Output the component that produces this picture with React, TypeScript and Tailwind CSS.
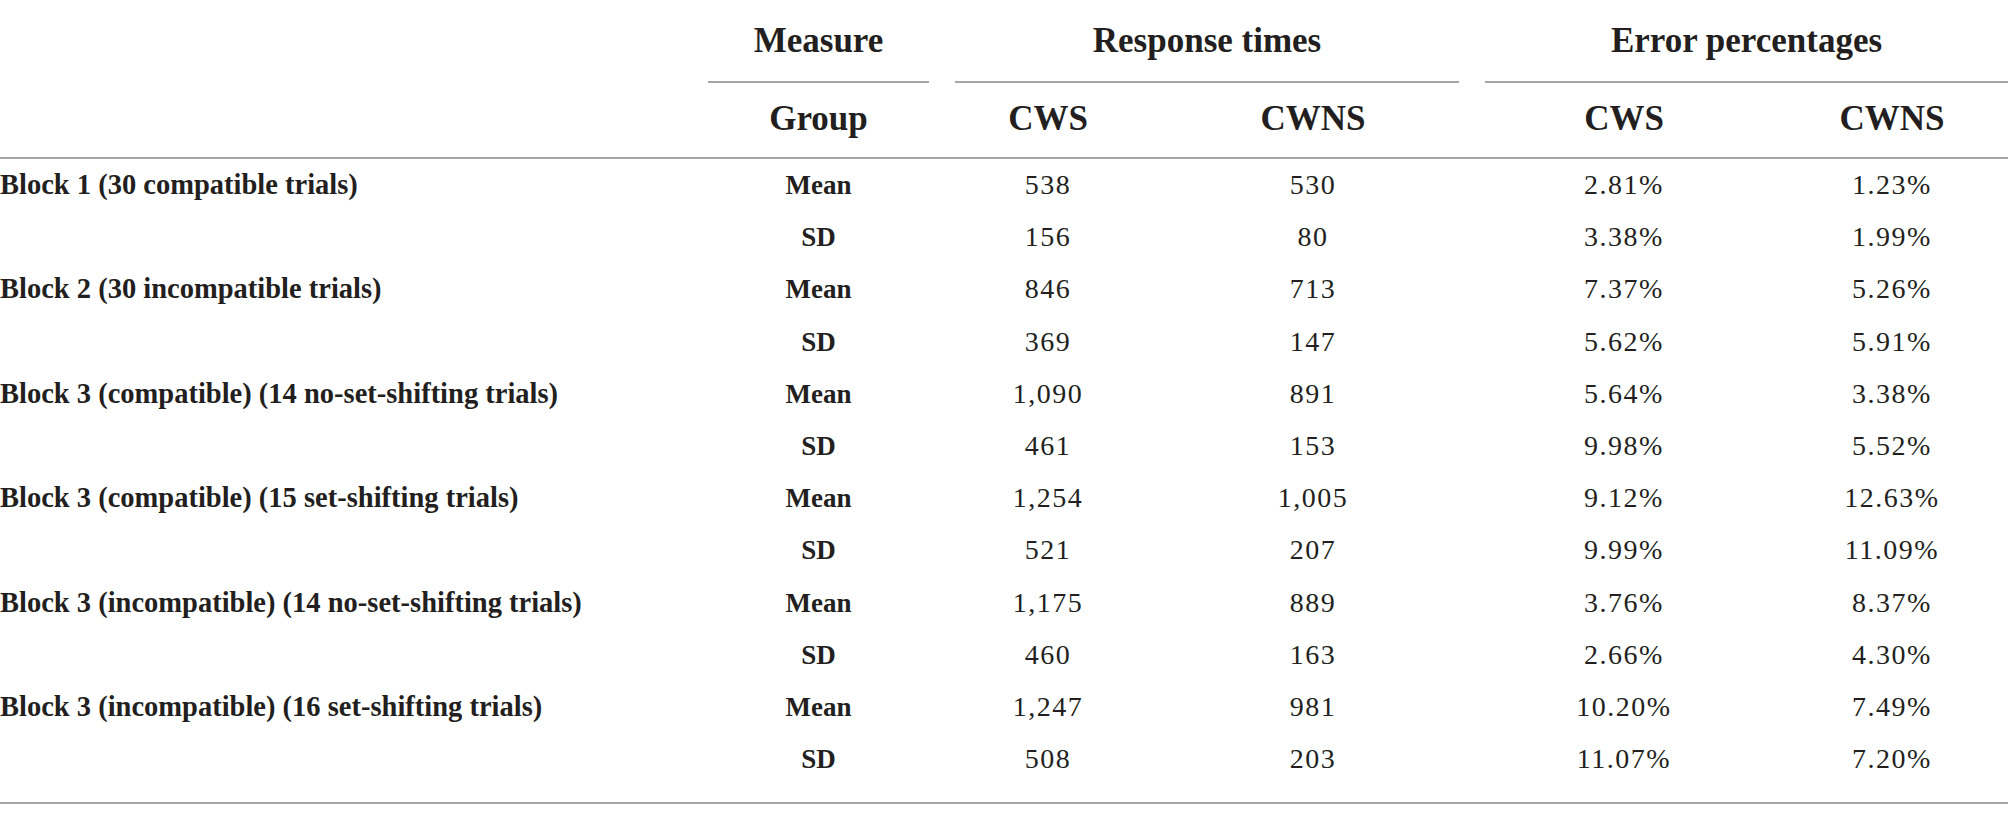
const rows = [
  { label: "Block 1 (30 compatible trials)", mean: ["538", "530", "2.81%", "1.23%"], sd: ["156", "80", "3.38%", "1.99%"] },
  { label: "Block 2 (30 incompatible trials)", mean: ["846", "713", "7.37%", "5.26%"], sd: ["369", "147", "5.62%", "5.91%"] },
  { label: "Block 3 (compatible) (14 no-set-shifting trials)", mean: ["1,090", "891", "5.64%", "3.38%"], sd: ["461", "153", "9.98%", "5.52%"] },
  { label: "Block 3 (compatible) (15 set-shifting trials)", mean: ["1,254", "1,005", "9.12%", "12.63%"], sd: ["521", "207", "9.99%", "11.09%"] },
  { label: "Block 3 (incompatible) (14 no-set-shifting trials)", mean: ["1,175", "889", "3.76%", "8.37%"], sd: ["460", "163", "2.66%", "4.30%"] },
  { label: "Block 3 (incompatible) (16 set-shifting trials)", mean: ["1,247", "981", "10.20%", "7.49%"], sd: ["508", "203", "11.07%", "7.20%"] },
];

const headCell = "pt-[21px] pb-[21px] border-b-2 border-[#a5a5a5] text-[35px] leading-[39px] font-bold";
const subCell = "pt-[16px] pb-[19px] border-b-2 border-[#a5a5a5] text-[35px] leading-[39px] font-bold text-center";
const cell = "p-0 text-[28px] leading-[52.2px] text-center tracking-[1.5px]";

const Row = ({ label, group, values }: { label: string; group: string; values: string[] }) => (
  <tr>
    <td className="p-0 text-[28.5px] leading-[52.2px] font-bold text-left whitespace-nowrap">{label}</td>
    <td className="p-0 text-[27px] leading-[52.2px] text-center font-bold">{group}</td>
    {values.map((v, i) => (
      <td key={i} className={cell}>
        {v}
      </td>
    ))}
  </tr>
);

export default function App() {
  return (
    <div className="w-[2008px] bg-white text-[#231f20] font-['Liberation_Serif',serif]">
      <div className="pb-[17px] border-b-2 border-[#a5a5a5]">
        <table className="w-[2008px] table-fixed border-separate border-spacing-0">
          <colgroup>
            <col className="w-[695px]" />
            <col className="w-[247px]" />
            <col className="w-[212px]" />
            <col className="w-[318px]" />
            <col className="w-[304px]" />
            <col className="w-[232px]" />
          </colgroup>
          <thead>
            <tr>
              <th className="p-0"></th>
              <th className="p-0 font-bold">
                <div className={headCell + " mx-[13px]"}>Measure</div>
              </th>
              <th colSpan={2} className="p-0">
                <div className={headCell + " mx-[13px]"}>Response times</div>
              </th>
              <th colSpan={2} className="p-0">
                <div className={headCell + " ml-[13px]"}>Error percentages</div>
              </th>
            </tr>
            <tr>
              <th className={subCell}></th>
              <th className={subCell}>Group</th>
              <th className={subCell}>CWS</th>
              <th className={subCell}>CWNS</th>
              <th className={subCell}>CWS</th>
              <th className={subCell}>CWNS</th>
            </tr>
          </thead>
          <tbody>
            {rows.map((r) => (
              <>
                <Row key={r.label + "m"} label={r.label} group="Mean" values={r.mean} />
                <Row key={r.label + "s"} label="" group="SD" values={r.sd} />
              </>
            ))}
          </tbody>
        </table>
      </div>
    </div>
  );
}
